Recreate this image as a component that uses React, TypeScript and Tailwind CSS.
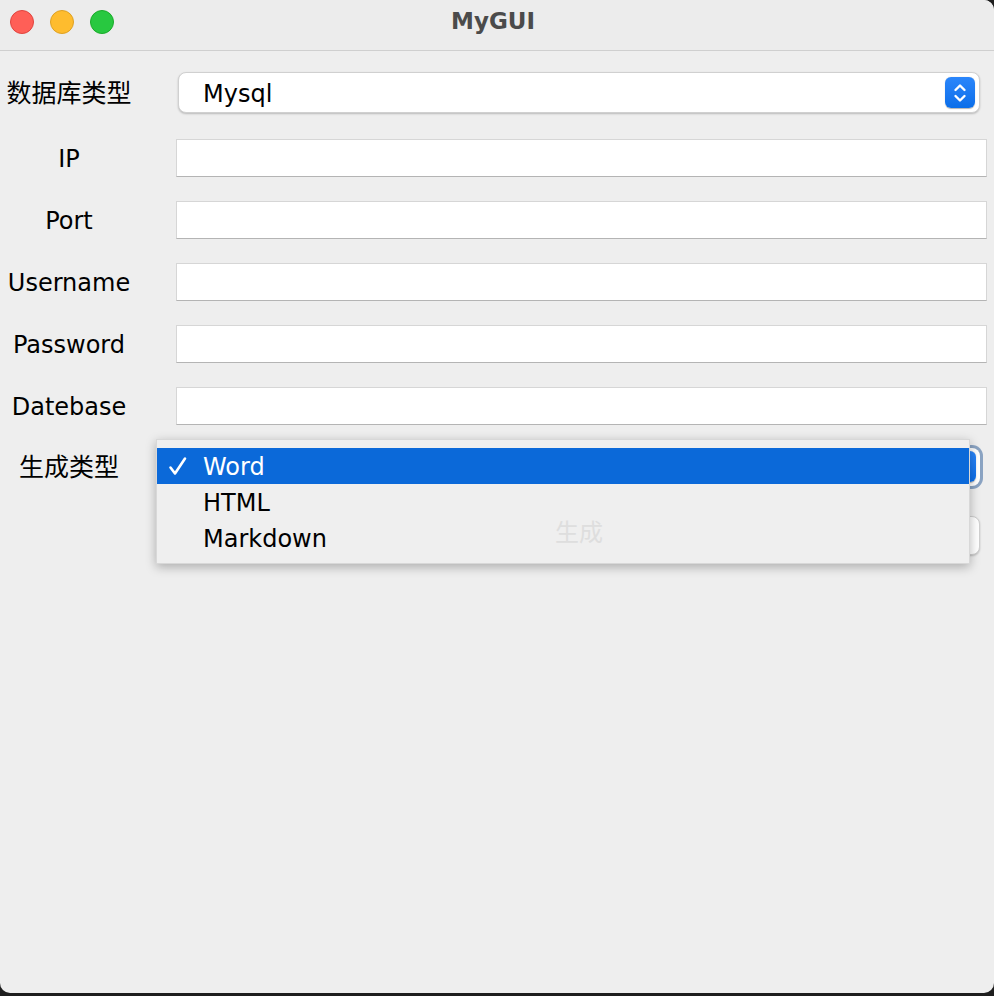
import React from "react";

const FONT = { fontFamily: '"DejaVu Sans", "Noto Sans CJK SC", sans-serif' };

function Stepper() {
  return (
    <div className="flex h-[31px] w-[30px] items-center justify-center rounded-[6px] bg-gradient-to-b from-[#2a86fb] to-[#0a6ee9] shadow-[0_0.5px_1px_rgba(0,0,0,0.3)]">
      <svg width="16" height="24" viewBox="0 0 16 24" fill="none" stroke="white" strokeWidth="2.4" strokeLinecap="round" strokeLinejoin="round">
        <path d="M3.5 9 L8 4.5 L12.5 9" />
        <path d="M3.5 15 L8 19.5 L12.5 15" />
      </svg>
    </div>
  );
}

function Field({ label }: { label: string }) {
  return (
    <div className="flex items-center">
      <div className="w-[138px] pt-[2px] text-center text-[24px] text-black">{label}</div>
      <div className="ml-[38px] h-[38px] w-[811px] border border-[#d6d6d6] border-b-[#b4b4b4] bg-white" />
    </div>
  );
}

export default function App() {
  return (
    <div className="h-[996px] w-full bg-[#1e1e1e]" style={FONT}>
      <div className="relative h-[993px] w-full overflow-hidden rounded-tr-[10px] rounded-b-[10px] bg-[#eeeeee]">
        {/* Title bar */}
        <div className="relative flex h-[51px] items-center justify-center border-b border-[#cfcfcf] bg-[#ececec] pr-[8px]">
          <div className="absolute left-[10px] top-[10px] flex gap-[16px]">
            <div className="h-[24px] w-[24px] rounded-full border border-[#e0443e] bg-[#ff5f57]" />
            <div className="h-[24px] w-[24px] rounded-full border border-[#dea123] bg-[#febc2e]" />
            <div className="h-[24px] w-[24px] rounded-full border border-[#1aab29] bg-[#28c840]" />
          </div>
          <div className="mb-[8px] text-[23px] font-bold text-[#4b4b4b]">MyGUI</div>
        </div>

        {/* Form */}
        <div className="flex flex-col pt-[21px]">
          <div className="flex items-center">
            <div className="w-[138px] pt-[2px] text-center text-[25px] text-black">数据库类型</div>
            <div className="ml-[40px] flex h-[41px] w-[802px] items-center justify-between rounded-[8px] border-[0.5px] border-[#d0d0d0] bg-white pl-[24px] pr-[4px] shadow-[0_1px_2px_rgba(0,0,0,0.22)]">
              <span className="pt-[2px] text-[24px] text-black">Mysql</span>
              <Stepper />
            </div>
          </div>

          <div className="mt-[26px] flex flex-col gap-[24px]">
            <Field label="IP" />
            <Field label="Port" />
            <Field label="Username" />
            <Field label="Password" />
            <Field label="Datebase" />
          </div>

          <div className="mt-[22px] flex items-center">
            <div className="w-[138px] pt-[2px] text-center text-[25px] text-black">生成类型</div>
            <div className="ml-[40px] flex h-[38px] w-[802px] items-center justify-between rounded-[8px] bg-white pl-[24px] pr-[4px] ring-[3px] ring-[#8aa3c2] shadow-[0_1px_2px_rgba(0,0,0,0.22)]">
              <span className="text-[24px] text-transparent">Word</span>
              <Stepper />
            </div>
          </div>

          <div className="mt-[29px] flex items-center">
            <div className="ml-[178px] flex h-[39px] w-[802px] items-center justify-center rounded-[8px] border-[0.5px] border-[#d0d0d0] bg-white text-[24px] shadow-[0_1px_2px_rgba(0,0,0,0.2)]">
              <span className="relative z-20 -mt-[4px] text-[#dedede]">生成</span>
            </div>
          </div>
        </div>

        {/* Popup menu */}
        <div className="absolute left-[156px] top-[439px] z-10 h-[125px] w-[814px] border border-[#d8d8d8] bg-[#efefef] pt-[8px] shadow-[0_3px_10px_rgba(0,0,0,0.28)]">
          <div className="flex h-[36px] items-center bg-[#0b69d9] text-[24px] text-white">
            <span className="flex w-[46px] items-center pl-[11px]">
              <svg width="20" height="20" viewBox="0 0 20 20" fill="none" stroke="white" strokeWidth="2.6" strokeLinecap="round" strokeLinejoin="round">
                <path d="M2.5 11.5 L7 17.5 L17 2.5" />
              </svg>
            </span>
            <span className="pt-[2px]">Word</span>
          </div>
          <div className="flex h-[36px] items-center text-[24px] text-black">
            <span className="w-[46px]" />
            <span className="pt-[2px]">HTML</span>
          </div>
          <div className="flex h-[36px] items-center text-[24px] text-black">
            <span className="w-[46px]" />
            <span className="pt-[2px]">Markdown</span>
          </div>
        </div>
      </div>
    </div>
  );
}
